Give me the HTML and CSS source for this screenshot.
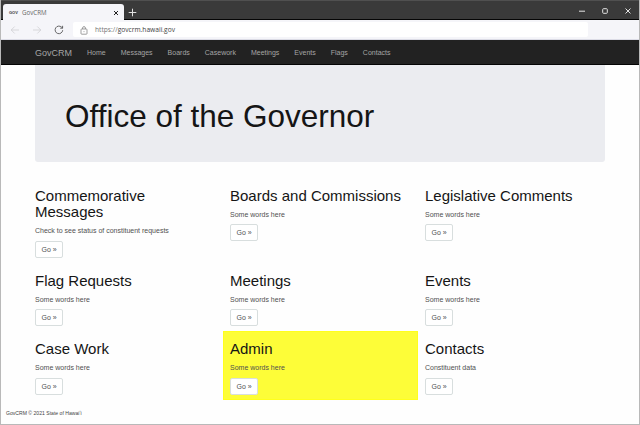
FILE: index.html
```html
<!DOCTYPE html>
<html lang="en">
<head>
<meta charset="utf-8">
<title>GovCRM</title>
<link rel="stylesheet" href="styles.css">
</head>
<body>
<div class="window">
  <header class="titlebar">
    <div class="tab">
      <span class="favicon">GOV</span>
      <span class="tab-title">GovCRM</span>
      <svg class="tab-close" viewBox="0 0 6 6"><path d="M1 1l4 4M5 1l-4 4"/></svg>
    </div>
    <svg class="new-tab" viewBox="0 0 9 9"><path d="M4.5 .7v7.6M.7 4.5h7.6"/></svg>
    <div class="controls">
      <svg viewBox="0 0 8 8"><path d="M1 4.2h6"/></svg>
      <svg viewBox="0 0 8 8"><rect x="1.7" y="1.7" width="4.6" height="4.6" rx=".8"/></svg>
      <svg viewBox="0 0 8 8"><path d="M1.5 1.5l5 5M6.5 1.5l-5 5"/></svg>
    </div>
  </header>
  <div class="toolbar">
    <svg class="tool off" viewBox="0 0 10 10"><path d="M9 5H1.2M4.7 1.5L1.2 5l3.5 3.5"/></svg>
    <svg class="tool off" viewBox="0 0 10 10"><path d="M1 5h7.8M5.3 1.5L8.8 5 5.3 8.5"/></svg>
    <svg class="tool" viewBox="0 0 10 10"><path d="M8.7 5.2A3.8 3.8 0 1 1 7.6 2.2L8.5 3M8.6.8V3.2H6.2"/></svg>
    <div class="address">
      <svg class="lock" viewBox="0 0 8 9"><rect x="1" y="3" width="6" height="5.2" rx=".7"/><path d="M2.6 3V2a1.4 1.4 0 0 1 2.8 0v1M4 5.2v.9"/></svg>
      <span><i class="scheme">https://</i>govcrm.hawaii.gov</span>
    </div>
  </div>
  <nav class="navbar">
    <a class="brand">GovCRM</a>
    <a>Home</a><a>Messages</a><a>Boards</a><a>Casework</a><a>Meetings</a><a>Events</a><a>Flags</a><a>Contacts</a>
  </nav>
  <main class="container">
    <section class="jumbotron"><h1>Office of the Governor</h1></section>
    <section class="grid">
      <article class="card"><h2>Commemorative Messages</h2><p>Check to see status of constituent requests</p><a class="btn">Go »</a></article>
      <article class="card"><h2>Boards and Commissions</h2><p>Some words here</p><a class="btn">Go »</a></article>
      <article class="card"><h2>Legislative Comments</h2><p>Some words here</p><a class="btn">Go »</a></article>
      <article class="card"><h2>Flag Requests</h2><p>Some words here</p><a class="btn">Go »</a></article>
      <article class="card"><h2>Meetings</h2><p>Some words here</p><a class="btn">Go »</a></article>
      <article class="card"><h2>Events</h2><p>Some words here</p><a class="btn">Go »</a></article>
      <article class="card"><h2>Case Work</h2><p>Some words here</p><a class="btn">Go »</a></article>
      <article class="card highlight"><h2>Admin</h2><p>Some words here</p><a class="btn">Go »</a></article>
      <article class="card"><h2>Contacts</h2><p>Constituent data</p><a class="btn">Go »</a></article>
    </section>
  </main>
  <footer class="footer">GovCRM © 2021 State of Hawaiʻi</footer>
</div>
</body>
</html>
```
FILE: styles.css
```css
* { box-sizing: border-box; }
body {
  margin: 0;
  font: 7px/10px "Liberation Sans", Arial, sans-serif;
  color: #505050;
}
svg { display: block; fill: none; stroke: currentColor; }
h1, h2, p { margin: 0; font-weight: 400; }
.window {
  width: 640px;
  height: 425px;
  overflow: hidden;
  background: #fefefe;
  border: solid #b9b9b9;
  border-width: 0 1px 1px;
}

.titlebar {
  display: flex;
  align-items: flex-end;
  height: 20px;
  margin: 0 -1px;
  background: #3a3a3a;
  border-top: 1px solid #505050;
  border-bottom: 1px solid #050505;
}
.tab {
  display: flex;
  align-items: center;
  width: 121px;
  height: 16px;
  margin: 0 0 -1px 3px;
  padding: 1px 5px 0 6px;
  background: #f5f5f9;
  border-radius: 3px 3px 0 0;
  font-family: "Open Sans", "Noto Sans", sans-serif;
  color: #666;
}
.favicon { width: 13px; font: bold 4px/10px "Liberation Sans", Arial, sans-serif; color: #333; }
.tab-title { flex: 1; font-size: 6.2px; }
.tab-close { width: 6px; height: 6px; color: #222; }
.new-tab { width: 9px; height: 9px; margin: 0 0 2px 4px; color: #e0e0e0; }
.controls { display: flex; gap: 15px; margin: 0 8px 4px auto; color: #e4e4e4; }
.controls svg { width: 8px; height: 8px; }

.toolbar {
  display: flex;
  align-items: center;
  height: 20px;
  padding: 0 51px 0 9px;
  background: #f5f5f9;
  border-bottom: 1px solid #dcdce6;
  color: #444;
}
.tool { width: 10px; height: 10px; margin-right: 12px; stroke-width: .8; }
.tool.off { color: #cfcfd3; }
.address {
  flex: 1;
  display: flex;
  align-items: center;
  height: 15px;
  margin-left: -3px;
  padding: 1px 0 0 7px;
  background: #fff;
  border-radius: 2px;
  font: 6.65px/10px "Open Sans", "Noto Sans", sans-serif;
  color: #444;
}
.lock { width: 8px; height: 9px; margin-right: 7px; color: #777; stroke-width: .7; }
.scheme { font-style: normal; color: #777; }

.navbar {
  display: flex;
  align-items: center;
  gap: 15px;
  height: 25px;
  margin: 0 -1px;
  padding: 2px 0 0 35px;
  background: #222;
  border-bottom: 1px solid #050505;
  color: #a5a5a5;
}
.brand { font-size: 9px; }

.container { width: 570px; margin: 0 34px; }
.jumbotron {
  height: 97px;
  padding: 34px 30px 0;
  background: #ebecf0;
  border-radius: 0 0 3px 3px;
  color: #151515;
}
.jumbotron h1 { font-size: 31.5px; line-height: 35px; }
.grid {
  display: grid;
  grid-template-columns: repeat(3, 195px);
  margin: 15.5px -7.5px 0;
}
.card { padding: 10px 7.5px 5px; }
.card h2 { margin-bottom: 5.5px; font-size: 15px; line-height: 16.5px; color: #151515; }
.card p { margin-bottom: 4.5px; }
.highlight { background: #fdfd38; box-shadow: inset 0 0 0 1px #ffff1c; }
.btn {
  display: block;
  width: 28px;
  height: 17px;
  padding-left: 5.5px;
  background: #fff;
  border: 1px solid #d8dede;
  border-radius: 2px;
  line-height: 15.5px;
}
.footer { margin: 8.5px 0 0 5px; font-size: 5.1px; color: #444; }
```
